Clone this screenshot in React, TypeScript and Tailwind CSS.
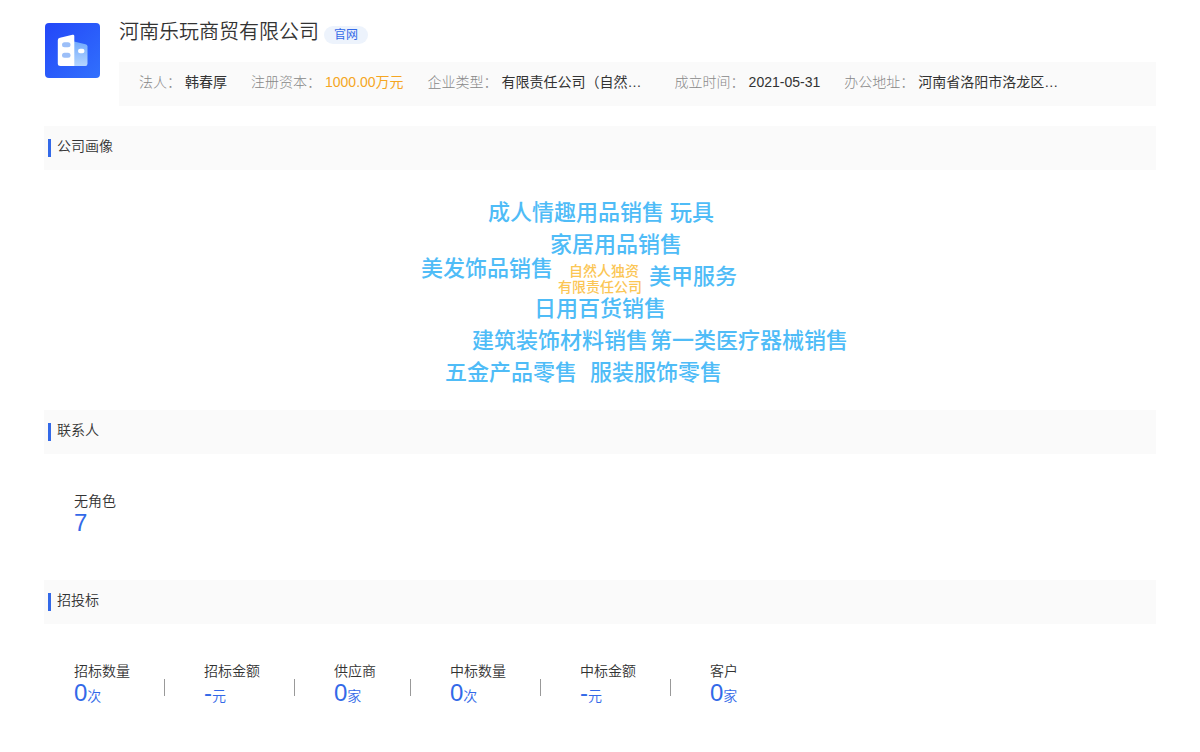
import React from "react";

type Fact = { label: string; value: string; tone?: string; wide?: boolean };

const facts: Fact[] = [
  { label: "法人：", value: "韩春厚" },
  { label: "注册资本：", value: "1000.00万元", tone: "text-[#f5a623]" },
  { label: "企业类型：", value: "有限责任公司（自然…", wide: true },
  { label: "成立时间：", value: "2021-05-31" },
  { label: "办公地址：", value: "河南省洛阳市洛龙区…", wide: true },
];

const large = "text-[22px] leading-8 text-[#4fbcf7]";
const small = "text-sm leading-4 text-[#fbc655]";

const words = [
  { text: "成人情趣用品销售", style: `${large} left-[144px] top-[27px]` },
  { text: "玩具", style: `${large} left-[326px] top-[27px]` },
  { text: "家居用品销售", style: `${large} left-[206px] top-[59px]` },
  { text: "美发饰品销售", style: `${large} left-[77px] top-[83px]` },
  { text: "自然人独资", style: `${small} left-[225px] top-[93px]` },
  { text: "有限责任公司", style: `${small} left-[214px] top-[109px]` },
  { text: "美甲服务", style: `${large} left-[305px] top-[91px]` },
  { text: "日用百货销售", style: `${large} left-[190px] top-[123px]` },
  { text: "建筑装饰材料销售", style: `${large} left-[128px] top-[155px]` },
  { text: "第一类医疗器械销售", style: `${large} left-[306px] top-[155px]` },
  { text: "五金产品零售", style: `${large} left-[101px] top-[187px]` },
  { text: "服装服饰零售", style: `${large} left-[246px] top-[187px]` },
];

const bids = [
  { label: "招标数量", value: "0", unit: "次" },
  { label: "招标金额", value: "-", unit: "元" },
  { label: "供应商", value: "0", unit: "家" },
  { label: "中标数量", value: "0", unit: "次" },
  { label: "中标金额", value: "-", unit: "元" },
  { label: "客户", value: "0", unit: "家" },
];

function CompanyLogo() {
  return (
    <svg viewBox="0 0 55 55" className="mt-[23px] size-[55px] shrink-0" aria-hidden="true">
      <defs>
        <linearGradient id="tile" x1="0" y1="0" x2="1" y2="1">
          <stop offset="0" stopColor="#2347f8" />
          <stop offset="1" stopColor="#3170fd" />
        </linearGradient>
        <linearGradient id="wing" x1="0" y1="0" x2="0" y2="1">
          <stop offset="0" stopColor="#72aafc" />
          <stop offset="1" stopColor="#b4d5ff" />
        </linearGradient>
      </defs>
      <rect width="55" height="55" rx="4" fill="url(#tile)" />
      <path d="M29 18.5 40.5 21.2Q42.500 21.800 42.500 23.500V40.500Q42.500 43 40.500 43H29Z" fill="url(#wing)" />
      <path d="M15 14.800 27.500 11.800Q29.300 11.400 29.300 13V43H15.500Q12.800 43 12.800 40.500V17.200Q12.800 15.300 15 14.800Z" fill="#fff" />
      <rect x="17" y="19.300" width="8.500" height="5" rx="2.500" fill="#9cbff8" />
      <rect x="17" y="29.800" width="8.500" height="5" rx="2.500" fill="#9cbff8" />
      <rect x="33" y="25.800" width="6.500" height="4.500" rx="2.200" fill="#fff" />
    </svg>
  );
}

function Section({ title, children }: { title: string; children: React.ReactNode }) {
  return (
    <section>
      <div className="flex h-11 items-start bg-[#fafafa] pl-1">
        <span className="mt-[13px] h-[18px] w-[3px] bg-[#3369e8]" />
        <h2 className="ml-1.5 font-['Liberation_Sans','Noto_Sans_CJK_SC_DemiLight','Noto_Sans_CJK_SC',sans-serif] text-sm leading-10 font-[350] text-[#333]">
          {title}
        </h2>
      </div>
      {children}
    </section>
  );
}

function Stat({ label, value, unit }: { label: string; value: string; unit?: string }) {
  return (
    <div className="font-['Liberation_Sans','Noto_Sans_CJK_SC_DemiLight','Noto_Sans_CJK_SC',sans-serif] font-[350]">
      <dt className="text-sm leading-5 text-[#333]">{label}</dt>
      <dd className="text-2xl leading-6 whitespace-nowrap text-[#3369e8]">
        {value}
        {unit && <span className="text-sm leading-none">{unit}</span>}
      </dd>
    </div>
  );
}

export default function App() {
  return (
    <main
      lang="zh-CN"
      className="min-h-screen bg-white px-11 pb-10 font-['Liberation_Sans','Noto_Sans_CJK_SC',sans-serif] text-[#333]"
    >
      <header className="mb-5 flex gap-5 pl-px">
        <CompanyLogo />
        <div className="-ml-px min-w-0 flex-1">
          <div className="flex h-[62px] items-start gap-[5px]">
            <h1 className="mt-[17px] font-['Liberation_Sans','Noto_Sans_CJK_SC_DemiLight','Noto_Sans_CJK_SC',sans-serif] text-xl leading-[30px] font-[350]">
              河南乐玩商贸有限公司
            </h1>
            <a href="#site" className="mt-[26px] rounded-full bg-[#edf3fc] px-2.5 text-xs leading-[18px] text-[#3369e8]">
              官网
            </a>
          </div>
          <dl className="flex min-h-11 flex-wrap gap-x-6 bg-[#fafafa] px-5 text-sm leading-10">
            {facts.map((fact) => (
              <div key={fact.label} className="flex gap-1">
                <dt className="font-light text-[#888]">{fact.label}</dt>
                <dd className={`whitespace-nowrap ${fact.tone ?? ""} ${fact.wide ? "w-[149px]" : ""}`}>{fact.value}</dd>
              </div>
            ))}
          </dl>
        </div>
      </header>

      <Section title="公司画像">
        <div className="relative mx-auto h-60 w-[512px] font-medium">
          {words.map((word) => (
            <span key={word.text} className={`absolute whitespace-nowrap ${word.style}`}>
              {word.text}
            </span>
          ))}
        </div>
      </Section>

      <Section title="联系人">
        <dl className="h-[126px] px-[30px] pt-[37px]">
          <Stat label="无角色" value="7" />
        </dl>
      </Section>

      <Section title="招投标">
        <dl className="flex px-[30px] pt-[37px]">
          {bids.map((bid, index) => (
            <div key={bid.label} className="flex">
              {index > 0 && <span className="mt-[18px] mr-[39px] ml-[34px] h-[17px] w-px bg-[#999]" />}
              <Stat {...bid} />
            </div>
          ))}
        </dl>
      </Section>
    </main>
  );
}
